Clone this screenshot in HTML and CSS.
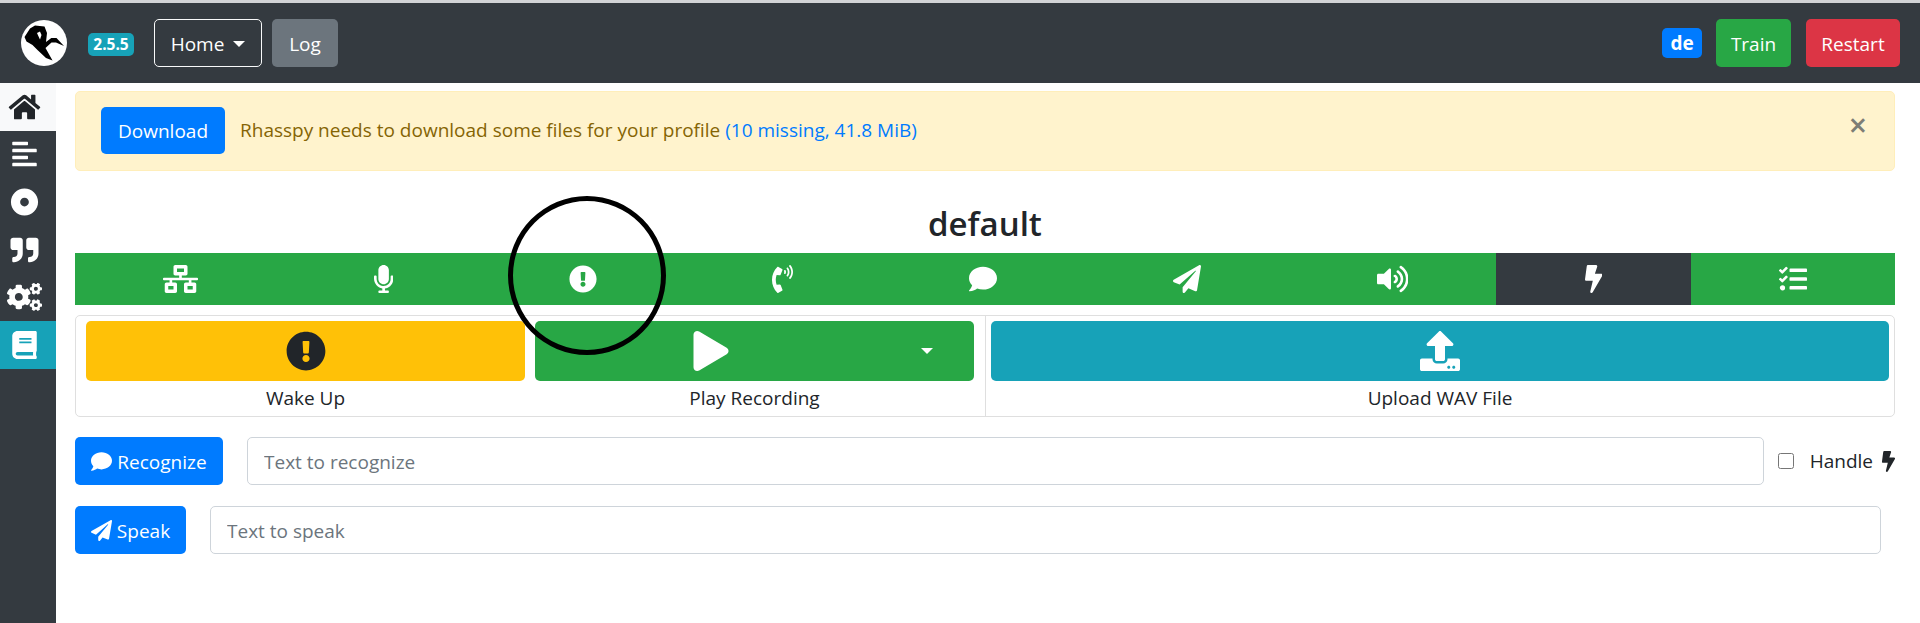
FILE: index.html
```html
<!DOCTYPE html>
<html lang="en">
<head>
<meta charset="utf-8">
<title>Rhasspy</title>
<link rel="stylesheet" href="styles.css">
</head>
<body>
<svg class="sprite" aria-hidden="true">
  <symbol id="home" viewBox="0 0 576 512"><path d="M280.37 148.26L96 300.11V464a16 16 0 0 0 16 16l112.06-.29a16 16 0 0 0 15.92-16V368a16 16 0 0 1 16-16h64a16 16 0 0 1 16 16v95.64a16 16 0 0 0 16 16.05L464 480a16 16 0 0 0 16-16V300L295.67 148.26a12.19 12.19 0 0 0-15.3 0zM571.6 251.47L488 182.56V44.05a12 12 0 0 0-12-12h-56a12 12 0 0 0-12 12v72.61L318.47 43a48 48 0 0 0-61 0L4.34 251.47a12 12 0 0 0-1.6 16.9l25.5 31A12 12 0 0 0 45.15 301l235.22-193.74a12.19 12.19 0 0 1 15.3 0L530.9 301a12 12 0 0 0 16.9-1.6l25.5-31a12 12 0 0 0-1.7-16.93z"/></symbol>
  <symbol id="align" viewBox="0 0 448 512"><path d="M12.83 352h262.34A12.82 12.82 0 0 0 288 339.17v-38.34A12.82 12.82 0 0 0 275.17 288H12.83A12.82 12.82 0 0 0 0 300.83v38.34A12.82 12.82 0 0 0 12.83 352zm0-256h262.34A12.82 12.82 0 0 0 288 83.17V44.83A12.82 12.82 0 0 0 275.17 32H12.83A12.82 12.82 0 0 0 0 44.83v38.34A12.82 12.82 0 0 0 12.83 96zM432 160H16a16 16 0 0 0-16 16v32a16 16 0 0 0 16 16h416a16 16 0 0 0 16-16v-32a16 16 0 0 0-16-16zm0 256H16a16 16 0 0 0-16 16v32a16 16 0 0 0 16 16h416a16 16 0 0 0 16-16v-32a16 16 0 0 0-16-16z"/></symbol>
  <symbol id="dot" viewBox="0 0 512 512"><path d="M256 8C119.033 8 8 119.033 8 256s111.033 248 248 248 248-111.033 248-248S392.967 8 256 8zm80 248c0 44.112-35.888 80-80 80s-80-35.888-80-80 35.888-80 80-80 80 35.888 80 80z"/></symbol>
  <symbol id="quote" viewBox="0 0 512 512"><path d="M464 32H336c-26.5 0-48 21.5-48 48v128c0 26.5 21.5 48 48 48h80v64c0 35.3-28.7 64-64 64h-8c-13.3 0-24 10.7-24 24v48c0 13.3 10.7 24 24 24h8c88.4 0 160-71.6 160-160V80c0-26.5-21.5-48-48-48zm-288 0H48C21.5 32 0 53.5 0 80v128c0 26.5 21.5 48 48 48h80v64c0 35.3-28.7 64-64 64h-8c-13.3 0-24 10.7-24 24v48c0 13.3 10.7 24 24 24h8c88.4 0 160-71.6 160-160V80c0-26.5-21.5-48-48-48z"/></symbol>
  <symbol id="cogs" viewBox="0 0 640 512"><path d="M512.1 191l-8.2 14.3c-3 5.3-9.4 7.5-15.1 5.4-11.8-4.4-22.6-10.7-32.1-18.6-4.6-3.8-5.8-10.5-2.8-15.7l8.2-14.3c-6.9-8-12.3-17.3-15.9-27.4h-16.5c-6 0-11.2-4.3-12.2-10.3-2-12-2.1-24.6 0-37.1 1-6 6.2-10.4 12.2-10.4h16.5c3.6-10.1 9-19.4 15.9-27.4l-8.2-14.3c-3-5.2-1.9-11.9 2.8-15.7 9.5-7.9 20.4-14.2 32.1-18.6 5.7-2.1 12.1.1 15.1 5.4l8.2 14.3c10.5-1.9 21.2-1.9 31.7 0L552 6.3c3-5.3 9.4-7.5 15.1-5.4 11.8 4.4 22.6 10.7 32.1 18.6 4.6 3.8 5.8 10.5 2.8 15.7l-8.2 14.3c6.9 8 12.3 17.3 15.9 27.4h16.5c6 0 11.2 4.3 12.2 10.3 2 12 2.1 24.6 0 37.1-1 6-6.2 10.4-12.2 10.4h-16.5c-3.6 10.1-9 19.4-15.9 27.4l8.2 14.3c3 5.2 1.9 11.9-2.8 15.7-9.5 7.9-20.4 14.2-32.1 18.6-5.7 2.1-12.1-.1-15.1-5.4l-8.2-14.3c-10.4 1.9-21.2 1.9-31.7 0zm-10.5-58.8c38.5 29.6 82.4-14.3 52.8-52.8-38.5-29.7-82.4 14.3-52.8 52.8zM386.3 286.1l33.7 16.8c10.1 5.8 14.5 18.1 10.5 29.1-8.9 24.2-26.4 46.4-42.6 65.8-7.4 8.9-20.2 11.1-30.3 5.3l-29.1-16.8c-16 13.7-34.6 24.6-54.9 31.7v33.6c0 11.6-8.3 21.6-19.7 23.6-24.6 4.2-50.4 4.4-75.9 0-11.5-2-20-11.9-20-23.6V418c-20.3-7.2-38.9-18-54.9-31.7L74 403c-10 5.8-22.9 3.6-30.3-5.3-16.2-19.4-33.3-41.6-42.2-65.7-4-10.9.4-23.2 10.5-29.1l33.3-16.8c-3.9-20.9-3.9-42.4 0-63.4L12 205.8c-10.1-5.8-14.6-18.1-10.5-29 8.9-24.2 26-46.4 42.2-65.8 7.4-8.9 20.2-11.1 30.3-5.3l29.1 16.8c16-13.7 34.6-24.6 54.9-31.7V57.1c0-11.5 8.2-21.5 19.6-23.5 24.6-4.2 50.5-4.4 76-.1 11.5 2 20 11.9 20 23.6v33.6c20.3 7.2 38.9 18 54.9 31.7l29.1-16.8c10-5.8 22.9-3.6 30.3 5.3 16.2 19.4 33.2 41.6 42.1 65.8 4 10.9.1 23.2-10 29.1l-33.7 16.8c3.9 21 3.9 42.5 0 63.5zm-117.6 21.1c59.2-77-28.7-164.9-105.7-105.7-59.2 77 28.7 164.9 105.7 105.7zm243.4 182.7l-8.2 14.3c-3 5.3-9.4 7.5-15.1 5.4-11.8-4.4-22.6-10.7-32.1-18.6-4.6-3.8-5.8-10.5-2.8-15.7l8.2-14.3c-6.9-8-12.3-17.3-15.9-27.4h-16.5c-6 0-11.2-4.3-12.2-10.3-2-12-2.1-24.6 0-37.1 1-6 6.2-10.4 12.2-10.4h16.5c3.6-10.1 9-19.4 15.9-27.4l-8.2-14.3c-3-5.2-1.9-11.9 2.8-15.7 9.5-7.9 20.4-14.2 32.1-18.6 5.7-2.1 12.1.1 15.1 5.4l8.2 14.3c10.5-1.9 21.2-1.9 31.7 0l8.2-14.3c3-5.3 9.4-7.5 15.1-5.4 11.8 4.4 22.6 10.7 32.1 18.6 4.6 3.8 5.8 10.5 2.8 15.7l-8.2 14.3c6.9 8 12.3 17.3 15.9 27.4h16.5c6 0 11.2 4.3 12.2 10.3 2 12 2.1 24.6 0 37.1-1 6-6.2 10.4-12.2 10.4h-16.5c-3.6 10.1-9 19.4-15.9 27.4l8.2 14.3c3 5.2 1.9 11.9-2.8 15.7-9.5 7.9-20.4 14.2-32.1 18.6-5.7 2.1-12.1-.1-15.1-5.4l-8.2-14.3c-10.4 1.9-21.2 1.9-31.7 0zM501.6 431c38.5 29.6 82.4-14.3 52.8-52.8-38.5-29.6-82.4 14.3-52.8 52.8z"/></symbol>
  <symbol id="book" viewBox="0 0 448 512"><path d="M448 360V24c0-13.3-10.7-24-24-24H96C43 0 0 43 0 96v320c0 53 43 96 96 96h328c13.3 0 24-10.7 24-24v-16c0-7.5-3.5-14.3-8.9-18.7-4.2-15.4-4.2-59.3 0-74.7 5.4-4.3 8.9-11.1 8.9-18.6zM128 134c0-3.3 2.7-6 6-6h212c3.3 0 6 2.7 6 6v20c0 3.3-2.7 6-6 6H134c-3.3 0-6-2.7-6-6v-20zm0 64c0-3.3 2.7-6 6-6h212c3.3 0 6 2.7 6 6v20c0 3.3-2.7 6-6 6H134c-3.3 0-6-2.7-6-6v-20zm253.4 250H96c-17.7 0-32-14.3-32-32 0-17.6 14.4-32 32-32h285.4c-1.9 17.1-1.9 46.9 0 64z"/></symbol>
  <symbol id="network" viewBox="0 0 640 512"><path d="M640 264v-16c0-8.84-7.16-16-16-16H344v-40h72c17.67 0 32-14.33 32-32V32c0-17.67-14.33-32-32-32H224c-17.67 0-32 14.33-32 32v128c0 17.67 14.33 32 32 32h72v40H16c-8.84 0-16 7.16-16 16v16c0 8.84 7.16 16 16 16h104v40H64c-17.67 0-32 14.33-32 32v128c0 17.67 14.33 32 32 32h160c17.67 0 32-14.33 32-32V352c0-17.67-14.33-32-32-32h-56v-40h304v40h-56c-17.67 0-32 14.33-32 32v128c0 17.67 14.33 32 32 32h160c17.67 0 32-14.33 32-32V352c0-17.67-14.33-32-32-32h-56v-40h104c8.84 0 16-7.16 16-16zM256 128V64h128v64H256zm-64 320H96v-64h96v64zm352 0h-96v-64h96v64z"/></symbol>
  <symbol id="mic" viewBox="0 0 352 512"><path d="M176 352c53.02 0 96-42.98 96-96V96c0-53.02-42.98-96-96-96S80 42.98 80 96v160c0 53.02 42.98 96 96 96zm160-160h-16c-8.84 0-16 7.16-16 16v48c0 74.8-64.49 134.82-140.79 127.38C96.71 376.89 48 317.11 48 250.3V208c0-8.84-7.16-16-16-16H16c-8.84 0-16 7.16-16 16v40.16c0 89.64 63.97 169.55 152 181.69V464H96c-8.84 0-16 7.16-16 16v16c0 8.84 7.16 16 16 16h160c8.84 0 16-7.16 16-16v-16c0-8.84-7.16-16-16-16h-56v-33.77C285.71 418.47 352 344.9 352 256v-48c0-8.84-7.16-16-16-16z"/></symbol>
  <symbol id="excl" viewBox="0 0 512 512"><path d="M504 256c0 136.997-111.043 248-248 248S8 392.997 8 256C8 119.083 119.043 8 256 8s248 111.083 248 248zm-248 50c-25.405 0-46 20.595-46 46s20.595 46 46 46 46-20.595 46-46-20.595-46-46-46zm-43.673-165.346l7.418 136c.347 6.364 5.609 11.346 11.982 11.346h48.546c6.373 0 11.635-4.982 11.982-11.346l7.418-136c.375-6.874-5.098-12.654-11.982-12.654h-63.383c-6.884 0-12.356 5.78-11.981 12.654z"/></symbol>
  <symbol id="phone" viewBox="0 0 384 512"><path d="M97.333 506.966c-129.874-129.874-129.681-340.252 0-469.933 5.698-5.698 14.527-6.632 21.263-2.422l64.817 40.513a17.187 17.187 0 0 1 6.849 20.958l-32.408 81.021a17.188 17.188 0 0 1-17.669 10.719l-55.81-5.58c-21.051 58.261-20.612 122.471 0 179.515l55.811-5.581a17.188 17.188 0 0 1 17.669 10.719l32.408 81.022a17.188 17.188 0 0 1-6.849 20.958l-64.817 40.513a17.19 17.19 0 0 1-21.264-2.422zM247.126 95.473c11.832 20.047 11.832 45.008 0 65.055-3.95 6.693-13.108 7.959-18.718 2.581l-5.975-5.726c-3.911-3.748-4.793-9.622-2.261-14.41a32.063 32.063 0 0 0 0-29.945c-2.533-4.788-1.65-10.662 2.261-14.41l5.975-5.726c5.61-5.378 14.768-4.112 18.718 2.581zm91.787-91.187c60.14 71.604 60.092 175.882 0 247.428-4.474 5.327-12.53 5.746-17.552.933l-5.798-5.557c-4.56-4.371-4.977-11.529-.93-16.379 49.687-59.538 49.646-145.933 0-205.422-4.047-4.85-3.631-12.008.93-16.379l5.798-5.557c5.022-4.813 13.078-4.394 17.552.933zm-45.972 44.941c36.05 46.322 36.108 111.149 0 157.546-4.39 5.641-12.697 6.251-17.856 1.304l-5.818-5.579c-4.4-4.219-4.998-11.095-1.285-15.931 26.536-34.564 26.534-82.572 0-117.134-3.713-4.836-3.115-11.711 1.285-15.931l5.818-5.579c5.159-4.947 13.466-4.337 17.856 1.304z"/></symbol>
  <symbol id="comment" viewBox="0 0 512 512"><path d="M256 32C114.6 32 0 125.1 0 240c0 49.6 21.4 95 57 130.7C44.5 421.1 2.7 466 2.2 466.5c-2.2 2.3-2.8 5.7-1.5 8.7S4.8 480 8 480c66.3 0 116-31.8 140.6-51.4 32.7 12.3 69 19.4 107.4 19.4 141.4 0 256-93.1 256-208S397.4 32 256 32z"/></symbol>
  <symbol id="plane" viewBox="0 0 512 512"><path d="M476 3.2L12.5 270.6c-18.1 10.4-15.8 35.6 2.2 43.2L121 358.4l287.3-253.2c5.5-4.9 13.3 2.6 8.6 8.3L176 407v80.5c0 23.6 28.5 32.9 42.5 15.8L282 426l124.6 52.2c14.2 6 30.4-2.9 33-18.2l72-432C515 7.8 493.3-6.8 476 3.2z"/></symbol>
  <symbol id="volume" viewBox="0 0 576 512"><path d="M215.03 71.05L126.06 160H24c-13.26 0-24 10.74-24 24v144c0 13.25 10.74 24 24 24h102.06l88.97 88.95c15.03 15.03 40.97 4.47 40.97-16.97V88.02c0-21.46-25.96-31.98-40.97-16.97zm233.32-51.08c-11.17-7.33-26.18-4.24-33.51 6.95-7.34 11.17-4.22 26.18 6.95 33.51 66.27 43.49 105.82 116.6 105.82 195.58 0 78.98-39.55 152.09-105.82 195.58-11.17 7.32-14.29 22.34-6.95 33.5 7.04 10.71 21.93 14.56 33.51 6.95C528.27 439.58 576 351.33 576 256S528.27 72.43 448.35 19.97zM480 256c0-63.53-32.06-121.94-85.77-156.24-11.19-7.14-26.03-3.82-33.12 7.46s-3.78 26.21 7.41 33.36C408.27 165.97 432 209.11 432 256s-23.73 90.03-63.48 115.42c-11.19 7.14-14.5 22.07-7.41 33.36 6.51 10.36 21.12 15.14 33.12 7.46C447.94 377.94 480 319.54 480 256zm-141.77-76.87c-11.58-6.33-26.19-2.16-32.61 9.45-6.39 11.61-2.16 26.2 9.45 32.61C327.98 228.28 336 241.63 336 256c0 14.38-8.02 27.72-20.92 34.81-11.61 6.41-15.84 21-9.45 32.61 6.43 11.66 21.05 15.8 32.61 9.45 28.23-15.55 45.77-45 45.77-76.88s-17.54-61.32-45.78-76.86z"/></symbol>
  <symbol id="bolt" viewBox="0 0 320 512"><path d="M296 160H180.6l42.6-129.8C227.2 15 215.7 0 200 0H56C44 0 33.8 8.9 32.2 20.8l-32 240C-1.7 275.2 9.5 288 24 288h118.7L96.6 482.5c-3.6 15.2 8 29.5 23.3 29.5 8.4 0 16.4-4.4 20.8-12l176-304c9.3-15.9-2.2-36-20.7-36z"/></symbol>
  <symbol id="tasks" viewBox="0 0 512 512"><path d="M139.61 35.5a12 12 0 0 0-17 0L58.93 98.81l-22.7-22.12a12 12 0 0 0-17 0L3.53 92.41a12 12 0 0 0 0 17l47.59 47.4a12.78 12.78 0 0 0 17.61 0l15.59-15.62L156.52 69a12.09 12.09 0 0 0 .09-17zm0 159.19a12 12 0 0 0-17 0l-63.68 63.72-22.7-22.1a12 12 0 0 0-17 0L3.53 252a12 12 0 0 0 0 17L51 316.5a12.77 12.77 0 0 0 17.6 0l15.7-15.69 72.2-72.22a12 12 0 0 0 .09-16.9zM64 368c-26.49 0-48.59 21.5-48.59 48S37.53 464 64 464a48 48 0 0 0 0-96zm432 16H208a16 16 0 0 0-16 16v32a16 16 0 0 0 16 16h288a16 16 0 0 0 16-16v-32a16 16 0 0 0-16-16zm0-320H208a16 16 0 0 0-16 16v32a16 16 0 0 0 16 16h288a16 16 0 0 0 16-16V80a16 16 0 0 0-16-16zm0 160H208a16 16 0 0 0-16 16v32a16 16 0 0 0 16 16h288a16 16 0 0 0 16-16v-32a16 16 0 0 0-16-16z"/></symbol>
  <symbol id="play" viewBox="0 0 448 512"><path d="M424.4 214.7L72.4 6.6C43.8-10.3 0 6.1 0 47.9V464c0 37.5 40.7 60.1 72.4 41.3l352-208c31.4-18.5 31.5-64.1 0-82.6z"/></symbol>
  <symbol id="upload" viewBox="0 0 512 512"><path d="M296 384h-80c-13.3 0-24-10.7-24-24V192h-87.7c-17.8 0-26.7-21.5-14.1-34.1L242.3 5.7c7.5-7.5 19.8-7.5 27.3 0l152.2 152.2c12.6 12.6 3.7 34.1-14.1 34.1H320v168c0 13.3-10.7 24-24 24zm216-8v112c0 13.3-10.7 24-24 24H24c-13.3 0-24-10.7-24-24V376c0-13.3 10.7-24 24-24h136v8c0 30.9 25.1 56 56 56h80c30.9 0 56-25.1 56-56v-8h136c13.3 0 24 10.7 24 24zm-124 88c0-11-9-20-20-20s-20 9-20 20 9 20 20 20 20-9 20-20zm64 0c0-11-9-20-20-20s-20 9-20 20 9 20 20 20 20-9 20-20z"/></symbol>
</svg>

<header class="navbar">
  <svg class="logo" viewBox="0 0 46 46" aria-hidden="true">
    <circle cx="23" cy="23" r="23" fill="#fff"/>
    <path fill="#000" d="M3.5 17 9 8.5 14 5.5 23.5 6.5 26 13 25 22 30.3 18 35.5 18 43 26 35 22.5 30.5 22.5 24.5 28 31.5 40.5 25 38 17 30.5 11.5 25 5.5 21.5Z"/>
    <path fill="#fff" d="M16 13 19 11.5 20.5 15 19 19.5 17.3 16Z"/>
  </svg>
  <span class="version">2.5.5</span>
  <button class="btn btn-outline home-btn">Home<span class="caret"></span></button>
  <button class="btn btn-gray">Log</button>
  <div class="nav-right">
    <span class="lang">de</span>
    <button class="btn btn-green">Train</button>
    <button class="btn btn-red">Restart</button>
  </div>
</header>

<div class="layout">
  <nav class="sidebar">
    <a class="side-item side-current"><svg class="ic-side"><use href="#home"/></svg></a>
    <a class="side-item"><svg class="ic-side"><use href="#align"/></svg></a>
    <a class="side-item"><svg class="ic-side"><use href="#dot"/></svg></a>
    <a class="side-item"><svg class="ic-side"><use href="#quote"/></svg></a>
    <a class="side-item"><svg class="ic-side ic-wide"><use href="#cogs"/></svg></a>
    <a class="side-item side-active"><svg class="ic-side"><use href="#book"/></svg></a>
  </nav>

  <main class="main">
    <div class="alert">
      <button class="btn btn-blue">Download</button>
      <span class="alert-text">Rhasspy needs to download some files for your profile <a class="alert-link">(10 missing, 41.8 MiB)</a></span>
      <span class="close">×</span>
    </div>

    <h1 class="title">default</h1>

    <div class="tabs">
      <a class="tab"><svg class="t-net"><use href="#network"/></svg></a>
      <a class="tab"><svg class="t-mic"><use href="#mic"/></svg></a>
      <a class="tab"><svg class="t-std"><use href="#excl"/></svg></a>
      <a class="tab"><svg class="t-phone"><use href="#phone"/></svg></a>
      <a class="tab"><svg class="t-std"><use href="#comment"/></svg></a>
      <a class="tab"><svg class="t-std"><use href="#plane"/></svg></a>
      <a class="tab"><svg class="t-vol"><use href="#volume"/></svg></a>
      <a class="tab tab-active"><svg class="t-bolt"><use href="#bolt"/></svg></a>
      <a class="tab"><svg class="t-std"><use href="#tasks"/></svg></a>
    </div>

    <section class="cards">
      <div class="card card-left">
        <div class="action">
          <button class="big btn-yellow"><svg class="big-ic"><use href="#excl"/></svg></button>
          <div class="action-label">Wake Up</div>
        </div>
        <div class="action">
          <div class="big split btn-green">
            <span class="split-main"><svg class="big-ic"><use href="#play"/></svg></span>
            <span class="split-toggle"><span class="caret caret-alone"></span></span>
          </div>
          <div class="action-label">Play Recording</div>
        </div>
      </div>
      <div class="card card-right">
        <div class="action">
          <button class="big btn-teal"><svg class="big-ic"><use href="#upload"/></svg></button>
          <div class="action-label">Upload WAV File</div>
        </div>
      </div>
    </section>

    <form class="form-row row-recognize">
      <button type="button" class="btn btn-blue btn-icon"><svg class="ic-btn"><use href="#comment"/></svg>Recognize</button>
      <input class="text-input" type="text" placeholder="Text to recognize">
      <label class="handle"><input class="check" type="checkbox"><span>Handle</span><svg class="ic-bolt"><use href="#bolt"/></svg></label>
    </form>
    <form class="form-row row-speak">
      <button type="button" class="btn btn-blue btn-icon"><svg class="ic-btn"><use href="#plane"/></svg>Speak</button>
      <input class="text-input" type="text" placeholder="Text to speak">
    </form>
  </main>
</div>

<div class="annotation"></div>
</body>
</html>
```
FILE: styles.css
```css
* { box-sizing: border-box; }
html, body { height: 100%; }
body {
  margin: 0;
  position: relative;
  overflow: hidden;
  background: #fff;
  color: #212529;
  font-family: "Open Sans", "Noto Sans", sans-serif;
  font-size: 19px;
  display: flex;
  flex-direction: column;
  border-top: 3px solid #d2d3d6;
}
.sprite { display: none; }
svg { fill: currentColor; display: block; }

.navbar {
  height: 80px;
  flex: none;
  background: #343a40;
  display: flex;
  align-items: center;
  padding: 0 20px 0 21px;
  color: #fff;
}
.logo { width: 46px; height: 46px; margin-right: 21px; }
.version {
  width: 46px;
  height: 23px;
  background: #17a2b8;
  color: #fff;
  font-size: 15.5px;
  font-weight: 700;
  border-radius: 5px;
  display: flex;
  align-items: center;
  justify-content: center;
  margin: 2px 20px 0 0;
}
.btn {
  height: 48px;
  padding: 1px 15px 0;
  border: 1px solid transparent;
  border-radius: 5px;
  font: inherit;
  color: #fff;
  display: inline-flex;
  align-items: center;
  justify-content: center;
  white-space: nowrap;
}
.btn-outline { background: transparent; border-color: #f8f9fa; width: 108px; margin-right: 10px; padding: 1px 12px 0; }
.btn-gray { background: #6c757d; width: 66px; }
.btn-green { background: #28a745; }
.btn-red { background: #dc3545; }
.btn-blue { background: #007bff; }
.btn-yellow { background: #ffc107; color: #212529; }
.btn-teal { background: #17a2b8; color: #fff; }
.caret {
  display: inline-block;
  margin-left: 9px;
  border-top: 6.5px solid currentColor;
  border-left: 6.5px solid transparent;
  border-right: 6.5px solid transparent;
}
.caret-alone { margin-left: 0; }
.nav-right { margin-left: auto; display: flex; align-items: center; }
.lang {
  width: 40px;
  height: 30px;
  margin: -1px 14px 0 0;
  background: #007bff;
  border-radius: 5px;
  font-weight: 700;
  font-size: 19px;
  display: flex;
  align-items: center;
  justify-content: center;
}
.nav-right .btn-green { width: 75px; margin-right: 15px; }
.nav-right .btn-red { width: 94px; }

.layout { flex: 1; display: flex; min-height: 0; }
.sidebar { width: 56px; flex: none; background: #343a40; color: #fff; }
.side-item {
  height: 47.6px;
  display: flex;
  align-items: center;
  justify-content: center;
  padding-right: 8px;
}
.side-current { background: #f8f9fa; color: #212529; }
.side-active { background: #17a2b8; }
.ic-side { width: 35px; height: 28px; }
.main { flex: 1; min-width: 0; padding: 8px 25px 0 19px; }

.alert {
  height: 80px;
  background: #fff3cd;
  border: 1px solid #ffeeba;
  border-radius: 5px;
  color: #856404;
  display: flex;
  align-items: center;
  padding: 0 25px;
}
.alert .btn { width: 124px; height: 47px; margin-bottom: 1px; }
.alert-text { margin-left: 15px; padding-bottom: 3px; }
.alert-link { color: #007bff; }
.close {
  margin: 0 2px 13px auto;
  font-size: 32px;
  font-weight: 600;
  color: #7d7d75;
  line-height: 1;
}

.title {
  margin: 0;
  height: 82px;
  padding-top: 22px;
  display: flex;
  align-items: center;
  justify-content: center;
  font-size: 33px;
  font-weight: 600;
  color: #212529;
}

.tabs { height: 52px; background: #28a745; display: flex; color: #fff; }
.tab { flex: 1 1 auto; display: flex; align-items: center; justify-content: center; }
.tab-active { background: #343a40; padding: 0 1px; }
.tab svg { height: 28px; }
.t-net { width: 35px; }
.t-mic { width: 19.25px; }
.t-std { width: 28px; }
.t-phone { width: 21px; }
.t-vol { width: 31.5px; }
.t-bolt { width: 17.5px; }

.cards {
  margin-top: 10px;
  height: 102px;
  border: 1px solid #dfdfdf;
  border-radius: 5px;
  display: flex;
}
.card { display: flex; padding-top: 5px; }
.card-left { flex: 0 0 909px; padding-left: 10px; padding-right: 11px; gap: 10px; }
.card-right { flex: 1 1 0; padding-left: 5px; padding-right: 5px; border-left: 1px solid #dfdfdf; }
.action { flex: 1 1 0; min-width: 0; }
.big {
  width: 100%;
  height: 60px;
  border: 0;
  border-radius: 5px;
  padding: 0;
  display: flex;
  align-items: center;
  justify-content: center;
  color: #fff;
}
.big.btn-yellow { color: #212529; }
.big-ic { width: 40px; height: 40px; }
.split { justify-content: flex-start; }
.split-main { flex: 0 0 80%; display: flex; justify-content: center; }
.split-toggle { flex: 1; display: flex; justify-content: center; padding-right: 6px; }
.action-label { text-align: center; margin-top: 4px; line-height: 26px; }

.form-row { display: flex; align-items: center; }
.row-recognize { margin-top: 20px; height: 48px; }
.row-speak { margin-top: 21px; height: 48px; padding-right: 14px; }
.btn-icon { gap: 5px; padding: 1px 10px 0; flex: none; }
.row-recognize .btn-icon { width: 148px; margin-right: 24px; }
.row-speak .btn-icon { width: 111px; margin-right: 24px; }
.ic-btn { width: 21px; height: 21px; }
.text-input {
  flex: 1;
  min-width: 0;
  height: 48px;
  border: 1px solid #ced4da;
  border-radius: 5px;
  padding: 1px 16px 0;
  font: inherit;
  color: #495057;
  background: #fff;
}
.text-input::placeholder { color: #6c757d; opacity: 1; }
.handle { display: flex; align-items: center; flex: none; margin: 0 -1px 0 14px; }
.check { width: 16px; height: 16px; margin: 0 16px 0 0; }
.ic-bolt { width: 15px; height: 21px; margin-left: 8px; }

.annotation {
  position: absolute;
  left: 507.5px;
  top: 193px;
  width: 158px;
  height: 159px;
  border: 5px solid #000;
  border-radius: 50%;
  pointer-events: none;
}
```
